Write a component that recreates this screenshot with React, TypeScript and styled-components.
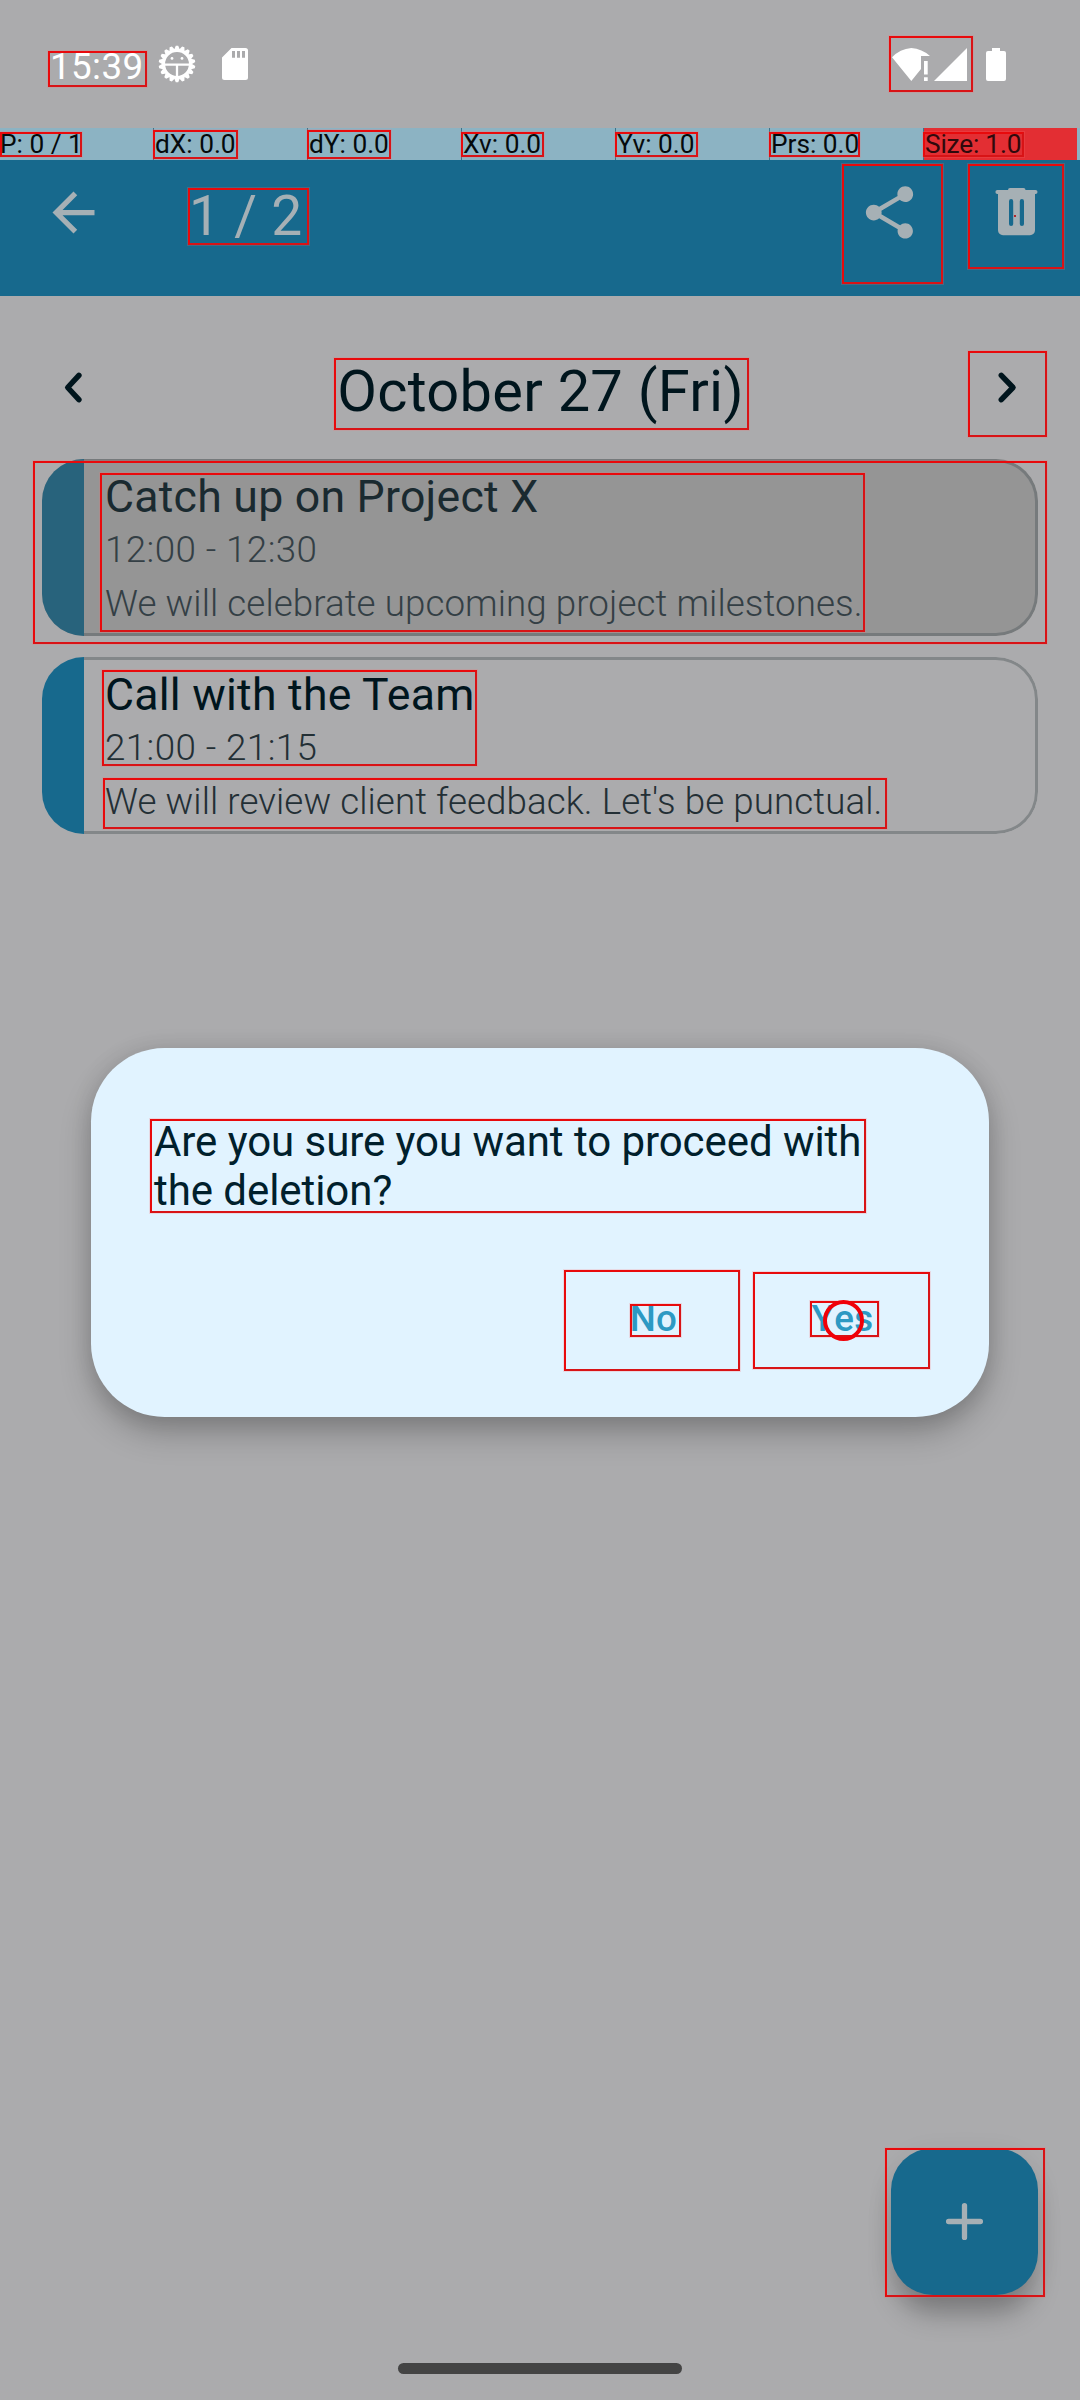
import React from 'react';
import styled, { createGlobalStyle } from 'styled-components';

const color = {
  page: '#ababad',
  primary: '#17698d',
  onPrimary: '#a6b0b5',
  ink: '#00151d',
  red: '#e80a0c',
};

const GlobalStyle = createGlobalStyle`
  * { box-sizing: border-box; }
  body { margin: 0; background: ${color.page}; font-family: Roboto, "Liberation Sans", sans-serif; }
  button { border: 0; padding: 0; background: none; font: inherit; color: inherit; }
  svg { display: block; }
`;

const Screen = styled.div`
  position: relative;
  width: 1080px;
  height: 2400px;
  overflow: hidden;
  display: flex;
  flex-direction: column;
  background: ${color.page};
`;

const StatusBar = styled.header`
  height: 128px;
  padding: 0 74px 0 50px;
  display: flex;
  align-items: center;
  color: #fff;
`;
const Clock = styled.span`
  width: 108px;
  padding-top: 5px;
  font-size: 36.75px;
  line-height: 44px;
  letter-spacing: 0.4px;
`;
const StatusIcons = styled.div<{ $end?: boolean }>`
  display: flex;
  align-items: center;
  margin-left: ${(p) => (p.$end ? 'auto' : '0')};
`;
const Gap = styled.span<{ $w: number }>`
  width: ${(p) => p.$w}px;
`;

const PointerBar = styled.div`
  height: 32px;
  display: flex;
  background: #8cb3c3;
`;
const PointerCell = styled.div<{ $first?: boolean; $alert?: boolean }>`
  width: ${(p) => (p.$first ? 153 : 154)}px;
  padding-left: ${(p) => (p.$first ? 0 : 1)}px;
  border-left: ${(p) => (p.$first ? '0' : '1px solid #3f7287')};
  background: ${(p) => (p.$alert ? '#e32e33' : 'transparent')};
  color: ${(p) => (p.$alert ? '#30090c' : '#050a0c')};
  font-size: 26.25px;
  line-height: 32px;
  letter-spacing: ${(p) => (p.$alert ? '-0.2px' : '0')};
  white-space: nowrap;
`;

const AppBar = styled.div`
  height: 136px;
  padding: 0 32px 32px 42px;
  display: flex;
  align-items: center;
  background: ${color.primary};
  color: ${color.onPrimary};
`;
const IconButton = styled.button`
  width: 63px;
  height: 63px;
  display: grid;
  place-items: center;
`;
const Counter = styled.h1`
  flex: 1;
  margin: 0;
  padding: 7px 0 0 84px;
  font-size: 55.125px;
  line-height: 68px;
  font-weight: 400;
  letter-spacing: 0.3px;
`;
const Actions = styled.div`
  display: flex;
  gap: 64px;
`;

const DateRow = styled.nav`
  height: 163px;
  padding: 20px 41px 0 42px;
  display: flex;
  align-items: center;
  justify-content: space-between;
  color: ${color.ink};
`;
const DateTitle = styled.h2`
  margin: 0;
  padding-top: 7px;
  font-size: 57.75px;
  line-height: 68px;
  font-weight: 400;
  letter-spacing: 0.28px;
`;

const EventList = styled.main`
  padding: 0 42px;
  display: flex;
  flex-direction: column;
  gap: 21px;
`;
const EventCard = styled.article<{ $selected?: boolean }>`
  height: 177px;
  display: flex;
  overflow: hidden;
  border-radius: 42px;
  background: ${(p) => (p.$selected ? '#959595' : 'transparent')};
  --bar: ${(p) => (p.$selected ? '#28637c' : color.primary)};
  --line: ${(p) => (p.$selected ? '#767a7c' : '#838789')};
  --title: ${(p) => (p.$selected ? '#1a2a30' : color.ink)};
  --body: ${(p) => (p.$selected ? '#343f45' : '#232f35')};
`;
const EventStripe = styled.div`
  width: 42px;
  background: var(--bar);
`;
const EventBody = styled.div`
  flex: 1;
  padding: 9px 0 0 21px;
  border: 3px solid var(--line);
  border-left: 0;
  border-radius: 0 42px 42px 0;
  color: var(--body);
  white-space: nowrap;
`;
const EventTitle = styled.h3`
  margin: 0;
  font-size: 44.625px;
  line-height: 52px;
  font-weight: 400;
  letter-spacing: 0.24px;
  color: var(--title);
`;
const EventTime = styled.p`
  margin: 0;
  font-size: 36.75px;
  line-height: 53px;
  font-weight: 300;
  letter-spacing: 0.42px;
`;
const EventNote = styled(EventTime)`
  line-height: 55px;
  letter-spacing: 0.065px;
`;

const DialogLayer = styled.div`
  position: absolute;
  inset: 65px 0 0;
  display: grid;
  place-items: center;
`;
const Dialog = styled.section`
  width: 898px;
  height: 369px;
  padding: 69px 63px 52px;
  display: flex;
  flex-direction: column;
  justify-content: space-between;
  border-radius: 73.5px;
  background: #e1f3ff;
  box-shadow: 0 17px 32px -2px rgba(0, 0, 0, 0.25), 0 0 22px rgba(0, 0, 0, 0.1);
`;
const DialogText = styled.p`
  margin: 0;
  font-size: 42px;
  line-height: 49px;
  letter-spacing: -0.06px;
  color: #00202c;
`;
const DialogActions = styled.div`
  display: flex;
  justify-content: flex-end;
  gap: 21px;
`;
const TextButton = styled.button`
  width: 168px;
  height: 92px;
  padding-left: 1px;
  font-size: 36.75px;
  line-height: 44px;
  font-weight: 500;
  letter-spacing: 0.26px;
  font-kerning: none;
  color: #2d99c3;
`;

const Fab = styled.button`
  position: absolute;
  right: 42px;
  bottom: 105px;
  width: 147px;
  height: 147px;
  display: grid;
  place-items: center;
  border-radius: 42px;
  background: ${color.primary};
  color: ${color.onPrimary};
  box-shadow: 0 24px 28px -6px rgba(0, 0, 0, 0.27), 0 6px 28px rgba(0, 0, 0, 0.07);
`;
const HomeHandle = styled.div`
  width: 284px;
  height: 11px;
  margin: auto auto 26px;
  border-radius: 6px;
  background: #444;
`;

const Mark = styled.div<{ $b: number[] }>`
  position: absolute;
  left: ${(p) => p.$b[0]}px;
  top: ${(p) => p.$b[1]}px;
  width: ${(p) => p.$b[2] - p.$b[0]}px;
  height: ${(p) => p.$b[3] - p.$b[1]}px;
  border: 2px solid ${color.red};
  border-right-color: #d81316;
  border-bottom-color: #d81316;
  box-shadow: 0 0 0 1px rgba(255, 110, 110, 0.2);
`;
const TapDot = styled.div`
  position: absolute;
  left: 1014px;
  top: 215px;
  width: 2px;
  height: 2px;
  background: #b3262b;
`;
const TapRing = styled.div`
  position: absolute;
  left: 823px;
  top: 1300px;
  width: 41px;
  height: 41px;
  border: 4px solid #f00008;
  border-radius: 50%;
`;

/* Bounds of inspected elements: left, top, right, bottom */
const marks = [
  [48, 51, 147, 87],
  [889, 36, 973, 92],
  [0, 132, 82, 157],
  [153, 130, 238, 159],
  [307, 130, 391, 159],
  [461, 132, 544, 157],
  [615, 132, 698, 157],
  [769, 132, 860, 157],
  [923, 132, 1024, 157],
  [188, 188, 309, 245],
  [842, 164, 943, 284],
  [968, 164, 1064, 269],
  [334, 358, 749, 430],
  [968, 351, 1047, 437],
  [33, 461, 1047, 644],
  [100, 473, 865, 632],
  [102, 670, 477, 766],
  [103, 778, 887, 829],
  [150, 1119, 866, 1213],
  [564, 1270, 740, 1371],
  [630, 1304, 681, 1337],
  [753, 1272, 930, 1369],
  [810, 1301, 879, 1337],
  [885, 2148, 1045, 2297],
];

const teeth = Array.from({ length: 18 }, (_, i) => i * 20);

const DebugIcon = () => (
  <svg width="38" height="38" viewBox="-19 -19 38 38">
    {teeth.map((a) => (
      <path key={a} d="M-3 -14 L-1.2 -18.3 H1.2 L3 -14Z" fill="#fff" transform={`rotate(${a})`} />
    ))}
    <circle r="13.4" fill="none" stroke="#fff" strokeWidth="3" />
    <path d="M-12 0.6H12M0 0.6V12" stroke="#fff" strokeWidth="2.3" />
    <circle cx="-5" cy="-5.6" r="1.4" fill="#fff" />
    <circle cx="5" cy="-5.6" r="1.4" fill="#fff" />
  </svg>
);

const SdIcon = () => (
  <svg width="26" height="32" viewBox="0 0 26 32">
    <path
      fill="#fff"
      fillRule="evenodd"
      d="M9.5 0H23.500a2.500 2.500 0 0 1 2.500 2.500V29.500a2.500 2.500 0 0 1-2.500 2.500H2.500A2.500 2.500 0 0 1 0 29.500V9.500ZM10 3v6.700h3V3ZM15 3v6.700h3V3ZM20 3v6.700h3V3Z"
    />
  </svg>
);

const WifiIcon = () => (
  <svg width="38" height="33" viewBox="0 0 38 33" fill="#fff">
    <path d="M0 9.200A31 31 0 0 1 19.300 0A31 31 0 0 1 38 8H29V21L19.300 33Z" />
    <path d="M32 13h3.700v13.500H32ZM32 29.300h3.700V33H32Z" />
  </svg>
);
const SignalIcon = () => (
  <svg width="33" height="33" viewBox="0 0 33 33">
    <path d="M33 0V33H0Z" fill="#fff" />
  </svg>
);
const BatteryIcon = () => (
  <svg width="20" height="33" viewBox="0 0 20 33">
    <path
      d="M6 0h8v3h4a2 2 0 0 1 2 2v26a2 2 0 0 1-2 2H2a2 2 0 0 1-2-2V5a2 2 0 0 1 2-2h4Z"
      fill="#fff"
    />
  </svg>
);
const BackIcon = () => (
  <svg width="63" height="63" viewBox="0 0 24 24" fill="currentColor">
    <path d="M20 11H7.830l5.590-5.590L12 4l-8 8 8 8 1.410-1.410L7.830 13H20v-2z" />
  </svg>
);
const ShareIcon = () => (
  <svg width="63" height="63" viewBox="0 0 24 24" fill="currentColor">
    <path d="M18 16.080c-.76 0-1.440.3-1.960.770L8.910 12.700c.05-.23.09-.46.09-.7s-.04-.47-.09-.7l7.050-4.110c.54.5 1.250.81 2.040.81 1.660 0 3-1.340 3-3s-1.340-3-3-3-3 1.340-3 3c0 .24.04.47.09.7L8.040 9.810C7.500 9.310 6.790 9 6 9c-1.660 0-3 1.340-3 3s1.340 3 3 3c.79 0 1.500-.31 2.040-.81l7.120 4.160c-.05.21-.08.43-.08.65 0 1.610 1.310 2.920 2.920 2.920s2.920-1.310 2.920-2.920-1.310-2.920-2.920-2.920z" />
  </svg>
);
const TrashIcon = () => (
  <svg width="43" height="48" viewBox="0 0 43 48" fill="currentColor">
    <path d="M15 0H28.500a2 2 0 0 1 2 2H40.500a2 2 0 0 1 0 4H2.400a2 2 0 0 1 0-4H13a2 2 0 0 1 2-2Z" />
    <path
      fillRule="evenodd"
      d="M3 5H40V42.300a5 5 0 0 1-5 5H8a5 5 0 0 1-5-5ZM14 13.200V36a2.100 2.100 0 0 0 4.200 0V13.200a2.100 2.100 0 0 0-4.200 0ZM24.800 13.200V36a2.100 2.100 0 0 0 4.200 0V13.200a2.100 2.100 0 0 0-4.200 0Z"
    />
  </svg>
);
const Chevron = ({ next }: { next?: boolean }) => (
  <svg
    width="63"
    height="63"
    viewBox="0 0 63 63"
    fill="none"
    stroke="currentColor"
    strokeWidth="5.500"
    strokeLinecap="round"
    strokeLinejoin="round"
  >
    <path d={next ? 'M25.300 19.300 L37 31.500 L25.300 43.700' : 'M36.900 19.300 L25.700 31.500 L36.900 43.700'} />
  </svg>
);
const PlusIcon = () => (
  <svg width="63" height="63" viewBox="0 0 63 63" stroke="currentColor" strokeWidth="5.300" strokeLinecap="round">
    <path d="M15.600 31.500H47.400M31.500 15.600V47.400" />
  </svg>
);

const pointerStats = ['P: 0 / 1', 'dX: 0.0', 'dY: 0.0', 'Xv: 0.0', 'Yv: 0.0', 'Prs: 0.0', 'Size: 1.0'];

const events = [
  {
    title: 'Catch up on Project X',
    time: '12:00 - 12:30',
    note: 'We will celebrate upcoming project milestones.',
    selected: true,
  },
  {
    title: 'Call with the Team',
    time: '21:00 - 21:15',
    note: "We will review client feedback. Let's be punctual.",
    selected: false,
  },
];

export default function App() {
  return (
    <>
      <GlobalStyle />
      <Screen>
        <StatusBar>
          <Clock>15:39</Clock>
          <StatusIcons>
            <DebugIcon />
            <Gap $w={26} />
            <SdIcon />
          </StatusIcons>
          <StatusIcons $end>
            <WifiIcon />
            <Gap $w={4} />
            <SignalIcon />
            <Gap $w={19} />
            <BatteryIcon />
          </StatusIcons>
        </StatusBar>
        <PointerBar>
          {pointerStats.map((s, i) => (
            <PointerCell key={s} $first={i === 0} $alert={i === 6}>
              {s}
            </PointerCell>
          ))}
        </PointerBar>
        <AppBar>
          <IconButton aria-label="Back">
            <BackIcon />
          </IconButton>
          <Counter>1 / 2</Counter>
          <Actions>
            <IconButton aria-label="Share">
              <ShareIcon />
            </IconButton>
            <IconButton aria-label="Delete">
              <TrashIcon />
            </IconButton>
          </Actions>
        </AppBar>
        <DateRow>
          <IconButton aria-label="Previous day">
            <Chevron />
          </IconButton>
          <DateTitle>October 27 (Fri)</DateTitle>
          <IconButton aria-label="Next day">
            <Chevron next />
          </IconButton>
        </DateRow>
        <EventList>
          {events.map((e) => (
            <EventCard key={e.title} $selected={e.selected}>
              <EventStripe />
              <EventBody>
                <EventTitle>{e.title}</EventTitle>
                <EventTime>{e.time}</EventTime>
                <EventNote>{e.note}</EventNote>
              </EventBody>
            </EventCard>
          ))}
        </EventList>
        <HomeHandle />
        <Fab aria-label="Add event">
          <PlusIcon />
        </Fab>
        <DialogLayer>
          <Dialog role="dialog">
            <DialogText>
              Are you sure you want to proceed with
              <br />
              the deletion?
            </DialogText>
            <DialogActions>
              <TextButton>No</TextButton>
              <TextButton>Yes</TextButton>
            </DialogActions>
          </Dialog>
        </DialogLayer>
        {marks.map((b) => (
          <Mark key={b.join()} $b={b} />
        ))}
        <TapDot />
        <TapRing />
      </Screen>
    </>
  );
}
